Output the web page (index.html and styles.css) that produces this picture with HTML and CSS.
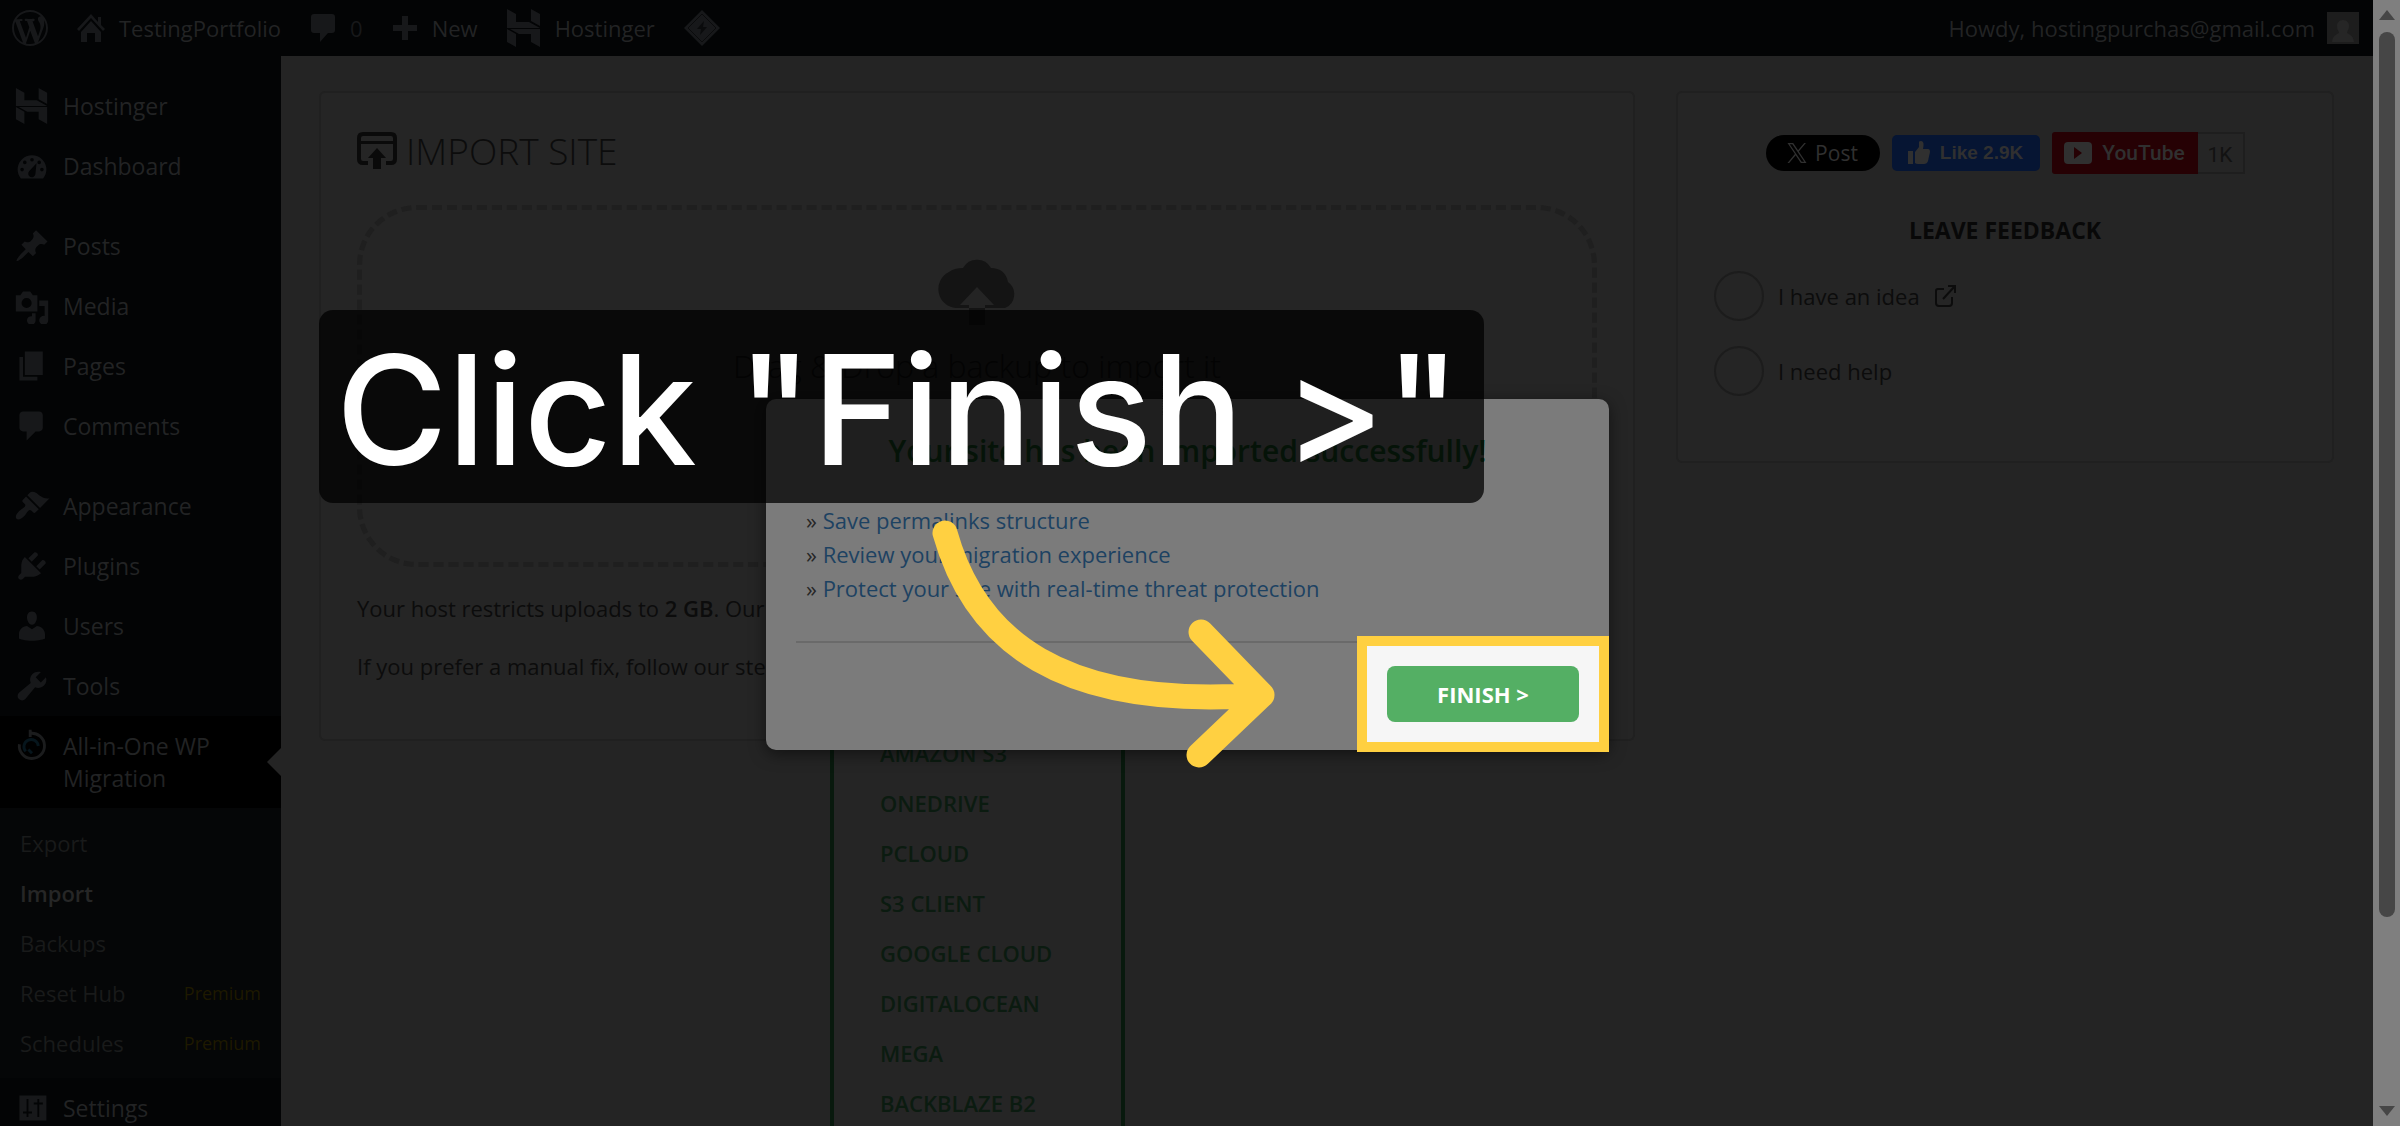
FILE: index.html
```
<!DOCTYPE html>
<html lang="en">
<head>
    <meta charset="UTF-8">
    <meta name="viewport" content="width=device-width, initial-scale=1.0">
    <title>Import Site</title>
    <link rel="stylesheet" href="styles.css">
</head>
<body>

<div class="screen">
    <div class="app">

        <!-- Admin bar -->
        <header class="topbar">
            <a href="#" class="wp-logo">
                <svg width="36" height="36" viewBox="0 0 20 20"><path d="M20 10c0-5.51-4.49-10-10-10C4.48 0 0 4.49 0 10c0 5.52 4.48 10 10 10 5.51 0 10-4.48 10-10zM7.78 15.37L4.37 6.22c.55-.02 1.17-.08 1.17-.08.5-.06.44-1.13-.06-1.11 0 0-1.45.11-2.37.11-.18 0-.37 0-.58-.01C4.12 2.69 6.87 1.11 10 1.11c2.33 0 4.45.87 6.05 2.34-.68-.11-1.65.39-1.65 1.58 0 .74.45 1.36.9 2.1.35.61.55 1.36.55 2.46 0 1.49-1.4 5-1.4 5l-3.03-8.37c.54-.02.82-.17.82-.17.5-.05.44-1.25-.06-1.22 0 0-1.44.12-2.38.12-.87 0-2.33-.12-2.33-.12-.5-.03-.56 1.2-.06 1.22l.92.08 1.26 3.41zM17.41 10c.24-.64.74-1.87.43-4.25.7 1.29 1.05 2.71 1.05 4.25 0 3.29-1.73 6.24-4.4 7.78.97-2.59 1.94-5.2 2.92-7.78zM6.1 18.09C3.12 16.65 1.11 13.53 1.11 10c0-1.3.23-2.48.72-3.59C3.25 10.3 4.67 14.2 6.1 18.09zm4.03-6.63l2.58 6.98c-.86.29-1.76.45-2.71.45-.79 0-1.57-.11-2.29-.33.81-2.38 1.62-4.74 2.42-7.1z"/></svg>
            </a>
            <a href="#" class="bar-item">
                <svg width="28" height="28" viewBox="0 0 28 28"><path d="M14 0 0 15l2 2L14 4l12 13 2-2-4-4V3h-3v5zM14 7 4 18v10h6v-9h8v9h6V18z"/></svg>
                <span>TestingPortfolio</span>
            </a>
            <a href="#" class="bar-item">
                <svg width="26" height="28" viewBox="0 0 26 28"><path d="M4 0h18q3 0 3 3v13q0 3-3 3h-4l-8 9v-9H4q-3 0-3-3V3q0-3 3-3z"/></svg>
                <span class="count">0</span>
            </a>
            <a href="#" class="bar-item">
                <svg width="26" height="26" viewBox="0 0 26 26"><path d="M10 1h6v9h9v6h-9v9h-6v-9H1v-6h9z"/></svg>
                <span>New</span>
            </a>
            <a href="#" class="bar-item">
                <svg width="34" height="38" viewBox="0 0 34 38"><path d="M0 0l9 5v8h13l11 6H0zM24 0l9 5v12l-9-5zM0 20l9 5v13l-9-5zM3 20h30v18l-9-5v-8H12z"/></svg>
                <span>Hostinger</span>
            </a>
            <a href="#" class="bar-item">
                <svg width="36" height="36" viewBox="0 0 36 36"><path d="M18 0 36 18 18 36 0 18z"/><path d="M18 4 32 18 18 32 4 18z" fill="none" stroke="#0a0b0c"/><path d="M20 11l-7 8h4l-1 6 7-8h-4z" fill="#0a0b0c"/></svg>
            </a>
            <a href="#" class="bar-item account">
                <span>Howdy, hostingpurchas@gmail.com</span>
                <svg width="32" height="32" viewBox="0 0 32 32"><path fill="#1d1d1d" d="M0 0h32v32H0z"/><path fill="#262626" d="M16 8c4 0 6 3 6 6 0 4-2 5-2 7 4 2 6 3 7 9H5c1-6 3-7 7-9 0-2-2-3-2-7 0-3 2-6 6-6z"/></svg>
            </a>
        </header>

        <div class="body">

            <!-- Side menu -->
            <nav class="sidebar">
                <a href="#" class="menu-item">
                    <svg width="36" height="40" viewBox="0 0 34 38"><path d="M0 0l9 5v8h13l11 6H0zM24 0l9 5v12l-9-5zM0 20l9 5v13l-9-5zM3 20h30v18l-9-5v-8H12z"/></svg>
                    <span>Hostinger</span>
                </a>
                <a href="#" class="menu-item">
                    <svg width="36" height="36" viewBox="0 0 20 20"><path fill-rule="evenodd" d="M3.8 17h12.4c1-1.300 1.800-3 1.800-5A8 8 0 0 0 2 12c0 2 .8 3.700 1.800 5zM10 5.500a1 1 0 1 1 0 2 1 1 0 0 1 0-2zM6 7a1 1 0 1 1 0 2 1 1 0 0 1 0-2zM14 7a1 1 0 1 1 0 2 1 1 0 0 1 0-2zM4.500 11a1 1 0 1 1 0 2 1 1 0 0 1 0-2zM15.500 11a1 1 0 1 1 0 2 1 1 0 0 1 0-2zM12.500 8.500l-.6 5.900a2 2 0 1 1-3.500-1.500z"/></svg>
                    <span>Dashboard</span>
                </a>
                <div class="separator"></div>
                <a href="#" class="menu-item">
                    <svg width="36" height="36" viewBox="0 0 20 20"><path d="M10.440 3.020l1.820-1.820 6.360 6.350-1.830 1.820c-1.050-.68-2.480-.57-3.410.36l-.75.75c-.92.930-1.040 2.350-.35 3.410l-1.830 1.820-2.410-2.410-2.800 2.790c-.42.420-3.380 2.710-3.800 2.290s1.860-3.390 2.280-3.810l2.790-2.790L4.100 9.360l1.830-1.820c1.050.69 2.480.57 3.400-.36l.75-.75c.93-.92 1.050-2.350.36-3.410z"/></svg>
                    <span>Posts</span>
                </a>
                <a href="#" class="menu-item">
                    <svg width="36" height="36" viewBox="0 0 20 20"><path fill-rule="evenodd" d="M1 4h2.500L5 2h4l1.500 2H13v9H1zM7 5.500a2.800 2.800 0 1 0 0 5.600 2.800 2.800 0 0 0 0-5.600zM14 7h5v11a2.500 2.500 0 1 1-2-2.500V10h-3zM10 14h2v4a2.400 2.400 0 1 1-2-2.300z"/></svg>
                    <span>Media</span>
                </a>
                <a href="#" class="menu-item">
                    <svg width="36" height="36" viewBox="0 0 20 20"><path d="M6 15V2h10v13H6zm-1 1h8v2H3V5h2v11z"/></svg>
                    <span>Pages</span>
                </a>
                <a href="#" class="menu-item">
                    <svg width="36" height="36" viewBox="0 0 20 20"><path d="M5 2h9c1.100 0 2 .9 2 2v7c0 1.100-.9 2-2 2h-2l-5 5v-5H5c-1.100 0-2-.9-2-2V4c0-1.100.9-2 2-2z"/></svg>
                    <span>Comments</span>
                </a>
                <div class="separator"></div>
                <a href="#" class="menu-item">
                    <svg width="36" height="36" viewBox="0 0 20 20"><path d="M14.480 11.060L7.410 3.990l1.500-1.500c.5-.56 2.300-.47 3.510.320 1.210.8 1.430 1.280 2.910 2.100 1.180.64 2.450 1.260 4.450.850zm-.71.710L6.700 4.700 4.930 6.470c-.39.390-.39 1.020 0 1.410l1.060 1.060c.39.390.39 1.030 0 1.420-.6.600-1.430 1.110-2.210 1.690-.35.260-.7.530-1.010.840C1.430 14.230.4 16.080 1.400 17.070c.990 1 2.840-.03 4.180-1.360.31-.31.580-.66.850-1.020.57-.78 1.080-1.610 1.690-2.210.39-.39 1.020-.39 1.410 0l1.060 1.060c.39.390 1.020.39 1.410 0z"/></svg>
                    <span>Appearance</span>
                </a>
                <a href="#" class="menu-item">
                    <svg width="36" height="36" viewBox="0 0 20 20"><path d="M13.110 4.360L9.870 7.600 8 5.730l3.240-3.240c.35-.34 1.050-.2 1.560.320.520.51.660 1.210.310 1.550zm-8 1.770l.910-1.120 9.010 9.010-1.190.840c-.71.710-2.630 1.160-3.820 1.160H6.140L4.900 17.260c-.59.590-1.540.59-2.120 0-.59-.58-.59-1.530 0-2.120l1.240-1.240v-3.880c0-1.130.4-3.190 1.090-3.890zm7.260 3.970l3.240-3.240c.34-.35 1.040-.21 1.550.310.520.51.660 1.210.310 1.550l-3.240 3.250z"/></svg>
                    <span>Plugins</span>
                </a>
                <a href="#" class="menu-item">
                    <svg width="36" height="36" viewBox="0 0 20 20"><path d="M10 9.250c-2.270 0-2.730-3.440-2.730-3.440C7 4.020 7.820 2 9.970 2c2.160 0 2.980 2.020 2.710 3.810 0 0-.41 3.440-2.680 3.440zm0 2.570L12.720 10c2.390 0 4.520 2.330 4.520 4.530v2.490s-3.650 1.130-7.240 1.130c-3.650 0-7.240-1.130-7.240-1.130v-2.490c0-2.250 1.940-4.480 4.470-4.480z"/></svg>
                    <span>Users</span>
                </a>
                <a href="#" class="menu-item">
                    <svg width="36" height="36" viewBox="0 0 20 20"><path d="M16.680 9.770c-1.340 1.340-3.300 1.670-4.950.990l-5.410 6.520c-.99.990-2.590.99-3.580 0s-.99-2.590 0-3.570l6.520-5.420c-.68-1.650-.35-3.610.99-4.950 1.280-1.280 3.120-1.620 4.720-1.060l-2.890 2.890 2.820 2.820 2.860-2.870c.53 1.580.18 3.390-1.080 4.650z"/></svg>
                    <span>Tools</span>
                </a>
                <a href="#" class="menu-item active">
                    <svg width="36" height="36" viewBox="0 0 20 20" fill="none" stroke-width="1.600"><path stroke="#1b1c1d" d="M3 9a7 7 0 1 0 6-6M9 1v4"/><path stroke="#06151c" d="M6.500 13a4 4 0 1 1 7-3M10 14l-2-2"/></svg>
                    <span>All-in-One WP Migration</span>
                </a>
                <div class="submenu">
                    <a href="#">Export</a>
                    <a href="#" class="current">Import</a>
                    <a href="#">Backups</a>
                    <a href="#">Reset Hub <span class="premium">Premium</span></a>
                    <a href="#">Schedules <span class="premium">Premium</span></a>
                </div>
                <a href="#" class="menu-item">
                    <svg width="36" height="36" viewBox="0 0 20 20"><path fill-rule="evenodd" d="M3 3h15v14H3zM7 5v7H5v1h2v2h1v-2h2v-1H8V5zM13 5v2h-2v1h2v7h1V8h2V7h-2V5z"/></svg>
                    <span>Settings</span>
                </a>
            </nav>

            <main class="content">
                <section class="card import-card">
                    <h1>
                        <svg width="40" height="38" viewBox="0 0 40 38"><path d="M11 31H6q-4 0-4-4V6q0-4 4-4h28q4 0 4 4v21q0 4-4 4h-5" fill="none" stroke="#0a0a0a" stroke-width="4"/><path fill="#0a0a0a" d="M2 9h36v3H2zM20 16l9 10h-5v11h-8V26h-5z"/></svg>
                        Import Site
                    </h1>
                    <div class="dropzone">
                        <svg width="82" height="68" viewBox="0 0 82 68"><path fill="#141414" d="M20 50A19 19 0 0 1 13 14q5-4 14-4a16 16 0 0 1 28 0q14 0 17 14a15 15 0 0 1-3 26z"/><path fill="#242424" d="M41 29l17 18H49v17H33V47H24z"/><path fill="#141414" d="M33 50h16v17H33z"/></svg>
                        <p>Drag &amp; Drop a backup to import it</p>
                        <ul class="import-menu">
                            <li><a href="#">Amazon S3</a></li>
                            <li><a href="#">OneDrive</a></li>
                            <li><a href="#">pCloud</a></li>
                            <li><a href="#">S3 Client</a></li>
                            <li><a href="#">Google Cloud</a></li>
                            <li><a href="#">DigitalOcean</a></li>
                            <li><a href="#">Mega</a></li>
                            <li><a href="#">Backblaze B2</a></li>
                        </ul>
                    </div>
                    <p class="note">Your host restricts uploads to <b>2 GB</b>. Our <a href="#">Unlimited Extension</a> bypasses this!</p>
                    <p class="note">If you prefer a manual fix, follow our step-by-step guide.</p>
                </section>

                <aside class="card feedback-card">
                    <div class="social">
                        <button class="post">
                            <svg width="20" height="20" viewBox="0 0 24 24"><path d="M14.200 10.200 22.700 0h-2l-7.400 8.800L7.400 0H.6l8.900 13.300L.6 24h2l7.800-9.300 6.200 9.300h6.800zM3.300 1.600h3.100l14.300 20.900h-3.100z"/></svg>
                            Post
                        </button>
                        <button class="like">
                            <svg width="22" height="24" viewBox="0 0 22 24"><path d="M0 10h5v13H0zM7 11l4-5V1q0-1 2-1c3 0 3 4 2 8h5q2 0 2 3l-2 9q-1 3-4 3h-6q-2 0-3-1z"/></svg>
                            Like 2.9K
                        </button>
                        <div class="youtube">
                            <button>
                                <svg width="28" height="22" viewBox="0 0 28 22"><rect width="28" height="22" rx="4"/><path fill="#260104" d="M10 5l8 6-8 6z"/></svg>
                                YouTube
                            </button>
                            <span>1K</span>
                        </div>
                    </div>
                    <h2>Leave Feedback</h2>
                    <div class="choice">
                        <input type="radio" name="feedback" id="idea">
                        <label for="idea">I have an idea</label>
                        <svg width="22" height="22" viewBox="0 0 22 22" fill="none" stroke="#0c0c0c" stroke-width="2"><path d="M10 4H4Q2 4 2 6v12q0 3 3 3h10q3 0 3-3v-6M14 1h7v7M21 1 9 14"/></svg>
                    </div>
                    <div class="choice">
                        <input type="radio" name="feedback" id="help">
                        <label for="help">I need help</label>
                    </div>
                </aside>
            </main>
        </div>
    </div>

    <!-- Scrollbar -->
    <div class="scrollbar">
        <svg width="16" height="10" viewBox="0 0 16 10"><path d="M8 0l8 10H0z"/></svg>
        <div class="thumb"></div>
        <svg width="16" height="10" viewBox="0 0 16 10"><path d="M0 0h16L8 10z"/></svg>
    </div>

    <!-- Import finished dialog -->
    <div class="modal" role="dialog">
        <h2>Your site has been imported successfully!</h2>
        <ul>
            <li>» <a href="#">Save permalinks structure</a></li>
            <li>» <a href="#">Review your migration experience</a></li>
            <li>» <a href="#">Protect your site with real-time threat protection</a></li>
        </ul>
        <hr>
        <div class="highlight">
            <button>FINISH &gt;</button>
        </div>
    </div>

    <div class="callout">Click "Finish &gt;"</div>

    <svg class="arrow" width="360" height="260" viewBox="930 515 360 260"><path d="M945 533C975 640 1060 710 1262 695M1201 632 1262 695 1199 755"/></svg>
</div>

</body>
</html>
```
FILE: styles.css
```
* {
    box-sizing: border-box;
}

body {
    margin: 0;
    background: #242424;
    font-family: "Open Sans", "Noto Sans", sans-serif;
    font-size: 22px;
    line-height: 32px;
    color: #0c0c0c;
}

a {
    text-decoration: none;
    color: inherit;
}

button {
    border: 0;
    font: inherit;
    color: inherit;
}

h1, h2, p, ul {
    margin: 0;
    padding: 0;
}

ul {
    list-style: none;
}

.screen {
    position: relative;
    display: flex;
    height: 100vh;
    overflow: hidden;
}

.app {
    flex: 1;
    min-width: 0;
}

/* Admin bar */
.topbar {
    display: flex;
    align-items: center;
    height: 56px;
    padding: 0 14px 0 12px;
    gap: 29px;
    background: #030405;
    color: #222324;
    fill: #17181a;
}

.topbar svg,
.menu-item svg {
    display: block;
    flex: none;
}

.bar-item {
    display: flex;
    align-items: center;
    gap: 14px;
}

.count {
    color: #17181a;
}

.account {
    margin-left: auto;
    gap: 12px;
}

/* Side menu */
.body {
    display: flex;
}

.sidebar {
    flex: none;
    width: 281px;
    padding-top: 20px;
    background: #030405;
    color: #222324;
    fill: #17181a;
    font-size: 23px;
}

.menu-item {
    display: flex;
    gap: 13px;
    padding: 14px;
    height: 60px;
}

.menu-item svg {
    width: 36px;
    height: 36px;
    margin-top: -2px;
}

.separator {
    height: 20px;
}

.menu-item.active {
    position: relative;
    height: 92px;
    padding-right: 50px;
    background: #000;
}

.menu-item.active::after {
    content: "";
    position: absolute;
    right: 0;
    top: 32px;
    border: 14px solid transparent;
    border-left: 0;
    border-right-color: #242424;
}

.submenu {
    padding: 10px 20px;
    background: #050607;
    color: #191a1a;
    font-size: 22px;
}

.submenu a {
    display: flex;
    justify-content: space-between;
    line-height: 50px;
}

.submenu .current {
    color: #262626;
    font-weight: 600;
}

.premium {
    color: #1e1900;
    font-size: 18px;
}

/* Content */
.content {
    flex: 1;
    display: grid;
    grid-template-columns: 2fr 1fr;
    align-items: start;
    gap: 41px;
    padding: 35px 39px 0 38px;
}

.card {
    min-width: 0;
    border: 2px solid #202020;
    border-radius: 6px;
    background: #252525;
    padding: 36px;
}

.import-card {
    height: 650px;
}

.feedback-card {
    height: 372px;
}

h1 {
    display: flex;
    align-items: center;
    gap: 9px;
    height: 44px;
    font-size: 37px;
    font-weight: 300;
    text-transform: uppercase;
}

.dropzone {
    position: relative;
    display: flex;
    flex-direction: column;
    align-items: center;
    height: 362px;
    margin: 32px 0 25px;
    padding-top: 48px;
    border: 5px dashed #1f1f1f;
    border-radius: 60px;
}

.dropzone p {
    margin-top: 20px;
    font-size: 32px;
    line-height: 40px;
    font-weight: 300;
}

.import-menu {
    position: absolute;
    top: 514px;
    left: 50%;
    width: 295px;
    height: 500px;
    margin-left: -147px;
    padding-left: 46px;
    border: 4px solid #08190d;
    background: #252525;
    color: #0b1b10;
    font-size: 22px;
    font-weight: 600;
    line-height: 50px;
    text-transform: uppercase;
}

.note {
    margin-bottom: 26px;
    white-space: nowrap;
}

.note b {
    font-weight: 600;
}

.note a {
    color: #07121b;
    text-decoration: underline;
}

/* Feedback card */
.social {
    display: flex;
    justify-content: center;
    align-items: center;
    gap: 12px;
    height: 48px;
    color: #303030;
    fill: #303030;
    font-size: 21px;
}

.social button {
    display: flex;
    align-items: center;
    justify-content: center;
    gap: 8px;
    height: 36px;
    padding: 0;
    font-weight: 500;
}

.social .post {
    width: 114px;
    border-radius: 18px;
    background: #000;
}

.social .like {
    width: 148px;
    gap: 10px;
    border-radius: 5px;
    background: #061533;
    font-family: "Liberation Sans", Arial, sans-serif;
    font-size: 19px;
    font-weight: 700;
}

.youtube {
    display: flex;
}

.social .youtube button {
    width: 146px;
    height: 42px;
    gap: 10px;
    border-radius: 3px 0 0 3px;
    background: #260104;
    font-family: Roboto, sans-serif;
}

.youtube span {
    width: 47px;
    height: 42px;
    border: 2px solid #1e1e1e;
    border-left: 0;
    color: #121212;
    font-family: Roboto, sans-serif;
    line-height: 42px;
    text-align: center;
}

.feedback-card h2 {
    margin: 37px 0 25px;
    font-size: 23px;
    font-weight: 700;
    text-align: center;
    text-transform: uppercase;
    color: #080808;
}

.choice {
    display: flex;
    align-items: center;
    gap: 14px;
    margin-bottom: 25px;
}

.choice input {
    appearance: none;
    width: 50px;
    height: 50px;
    margin: 0;
    border: 2px solid #1c1c1c;
    border-radius: 50%;
}

/* Scrollbar */
.scrollbar {
    display: flex;
    flex-direction: column;
    align-items: center;
    width: 27px;
    padding: 10px 0;
    background: #7f7f7f;
    fill: #464646;
}

.thumb {
    width: 16px;
    height: 80%;
    margin: 12px 0 auto;
    border-radius: 8px;
    background: #464646;
}

/* Dialog */
.modal {
    position: absolute;
    left: 766px;
    top: 399px;
    width: 843px;
    height: 351px;
    padding: 32px 30px;
    border-radius: 10px;
    background: #7b7b7b;
    box-shadow: 0 4px 16px rgba(0, 0, 0, 0.5);
}

.modal h2 {
    margin-bottom: 32px;
    font-size: 30px;
    line-height: 40px;
    font-weight: 600;
    text-align: center;
    color: #144d22;
}

.modal ul {
    padding-left: 10px;
    line-height: 34px;
    color: #262626;
}

.modal ul a {
    color: #1d4262;
}

.modal hr {
    height: 2px;
    margin: 36px 0 0;
    border: 0;
    background: #6a6a6a;
}

.highlight {
    position: absolute;
    right: 0;
    bottom: -2px;
    padding: 20px;
    border: 10px solid #ffd041;
    background: #f6f6f6;
}

.highlight button {
    display: block;
    width: 192px;
    height: 56px;
    border-radius: 8px;
    background: #54af64;
    color: #fff;
    font-size: 22px;
    font-weight: 700;
}

/* Step callout and arrow */
.callout {
    position: absolute;
    left: 319px;
    top: 310px;
    padding: 8px 24px 0 17px;
    border-radius: 14px;
    background: rgba(0, 0, 0, 0.75);
    color: #fff;
    font-family: Inter, sans-serif;
    font-size: 152px;
    font-weight: 500;
    line-height: 185px;
    white-space: nowrap;
}

.arrow {
    position: absolute;
    left: 930px;
    top: 515px;
    fill: none;
    stroke: #ffd041;
    stroke-width: 25px;
    stroke-linecap: round;
    stroke-linejoin: round;
}
```
